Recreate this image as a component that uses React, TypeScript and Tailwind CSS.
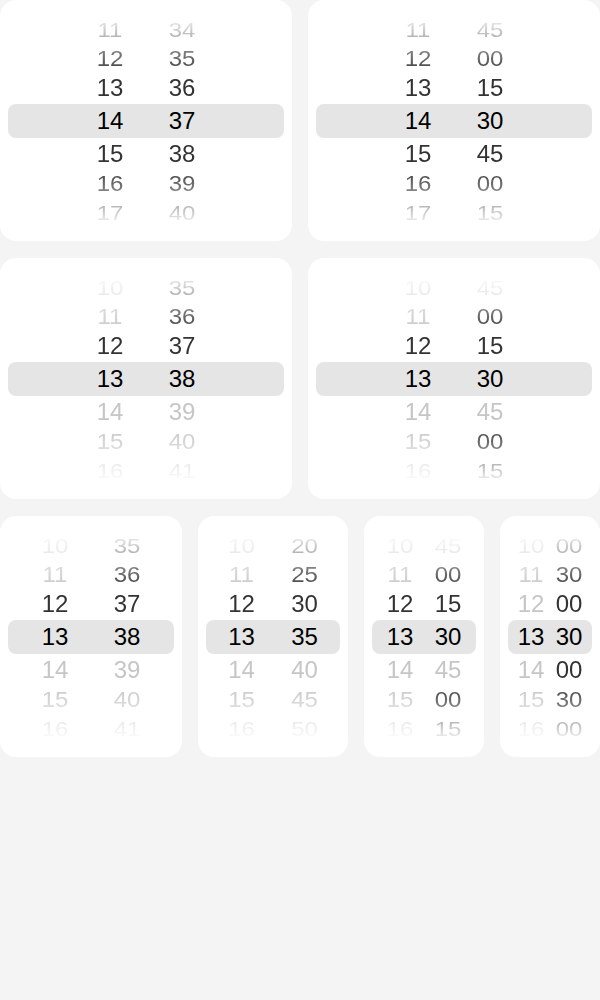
import React from "react";

type Cell = { v: string; s?: "on" | "off" };

interface Picker {
  width: string;
  hours: Cell[];
  minutes: Cell[];
}

// row heights of the wheel, top to bottom (center row is the selected one)
const rowHeights = ["h-[30px]", "h-[28px]", "h-[31px]", "h-[34px]", "h-[32px]", "h-[29px]", "h-[28px]"];
// rows away from the center look squashed, like on a drum
const rowScale = ["scale-y-[0.85]", "scale-y-[0.9]", "scale-y-[0.96]", "", "scale-y-[0.96]", "scale-y-[0.9]", "scale-y-[0.85]"];

const all = (vals: string[]): Cell[] => vals.map((v) => ({ v, s: "on" }));
const pick = (vals: string[], on: boolean[]): Cell[] =>
  vals.map((v, i) => ({ v, s: on[i] ? "on" : "off" }));

const limitedHours = pick(
  ["10", "11", "12", "13", "14", "15", "16"],
  [false, false, true, true, false, false, false]
);
const quarterMinutes = pick(
  ["45", "00", "15", "30", "45", "00", "15"],
  [false, true, true, true, false, true, true]
);
const minutes38 = pick(
  ["35", "36", "37", "38", "39", "40", "41"],
  [true, true, true, true, false, false, false]
);

const topRow: Picker[] = [
  {
    width: "",
    hours: all(["11", "12", "13", "14", "15", "16", "17"]),
    minutes: all(["34", "35", "36", "37", "38", "39", "40"]),
  },
  {
    width: "",
    hours: all(["11", "12", "13", "14", "15", "16", "17"]),
    minutes: all(["45", "00", "15", "30", "45", "00", "15"]),
  },
];

const midRow: Picker[] = [
  { width: "", hours: limitedHours, minutes: minutes38 },
  { width: "", hours: limitedHours, minutes: quarterMinutes },
];

const bottomRow: Picker[] = [
  { width: "w-[182px]", hours: limitedHours, minutes: minutes38 },
  {
    width: "w-[150px]",
    hours: limitedHours,
    minutes: pick(
      ["20", "25", "30", "35", "40", "45", "50"],
      [true, true, true, true, false, false, false]
    ),
  },
  { width: "w-[120px]", hours: limitedHours, minutes: quarterMinutes },
  {
    width: "w-[100px]",
    hours: pick(
      ["10", "11", "12", "13", "14", "15", "16"],
      [false, false, false, true, false, false, false]
    ),
    minutes: all(["00", "30", "00", "30", "00", "30", "00"]),
  },
];

const cellColor = (c: Cell, selected: boolean) => {
  if (selected) return "text-black";
  return c.s === "off" ? "text-[#c6c6c6]" : "text-[#333333]";
};

const TimeWheel = ({ picker }: { picker: Picker }) => {
  return (
    <div
      className={`bg-white rounded-2xl h-[241px] flex flex-col justify-center shrink-0 ${picker.width}`}
    >
      <div className="[mask-image:linear-gradient(to_bottom,transparent_0%,black_28%,black_72%,transparent_100%)] [-webkit-mask-image:linear-gradient(to_bottom,transparent_0%,black_28%,black_72%,transparent_100%)]">
        {picker.hours.map((h, i) => {
          const selected = i === 3;
          const m = picker.minutes[i];
          return (
            <div
              key={i}
              className={`${rowHeights[i]} mx-2 px-1 flex items-center justify-center ${
                selected ? "bg-[#e5e5e5] rounded-lg" : ""
              }`}
            >
              <span className={`flex-1 max-w-[72px] text-center ${rowScale[i]} ${cellColor(h, selected)}`}>
                {h.v}
              </span>
              <span className={`flex-1 max-w-[72px] text-center ${rowScale[i]} ${cellColor(m, selected)}`}>
                {m.v}
              </span>
            </div>
          );
        })}
      </div>
    </div>
  );
};

export default function App() {
  return (
    <div className="min-h-screen bg-[#f4f4f4] font-['Liberation_Sans',Arial,sans-serif] text-[24px] leading-none">
      <div className="flex flex-col gap-[17px]">
        <div className="grid grid-cols-2 gap-4">
          {topRow.map((p, i) => (
            <TimeWheel key={i} picker={p} />
          ))}
        </div>
        <div className="grid grid-cols-2 gap-4">
          {midRow.map((p, i) => (
            <TimeWheel key={i} picker={p} />
          ))}
        </div>
        <div className="flex gap-4">
          {bottomRow.map((p, i) => (
            <TimeWheel key={i} picker={p} />
          ))}
        </div>
      </div>
    </div>
  );
}
